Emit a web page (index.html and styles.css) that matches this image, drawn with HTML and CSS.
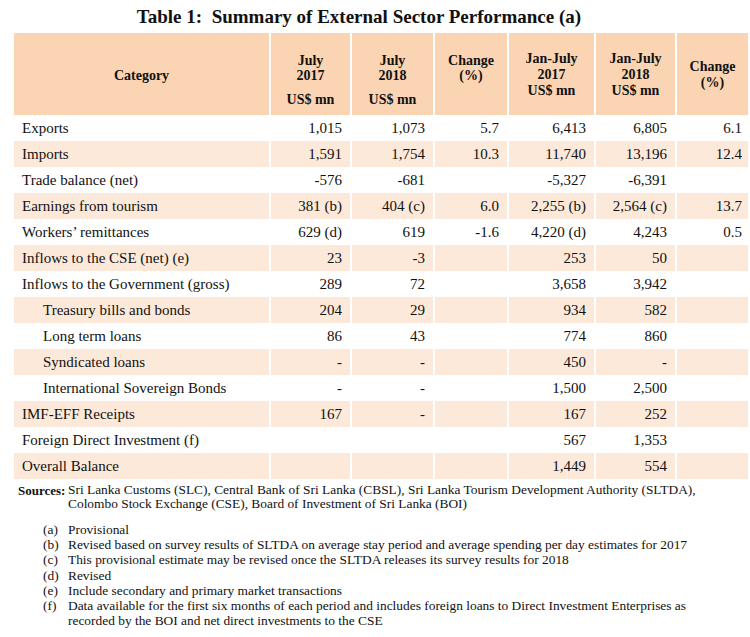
FILE: index.html
```html
<!DOCTYPE html>
<html lang="en">
<head>
<meta charset="utf-8">
<title>Table 1: Summary of External Sector Performance</title>
<link rel="stylesheet" href="styles.css">
</head>
<body>
<div class="page">
  <h1 class="title">Table 1:&nbsp; Summary of External Sector Performance (a)</h1>
  <table class="summary">
    <colgroup>
      <col class="c-cat"><col class="c-m1"><col class="c-m2"><col class="c-ch1"><col class="c-y1"><col class="c-y2"><col class="c-ch2">
    </colgroup>
    <thead>
      <tr>
        <th class="h-cat">Category</th>
        <th class="h-month">July<br>2017<div class="unit">US$ mn</div></th>
        <th class="h-month">July<br>2018<div class="unit">US$ mn</div></th>
        <th class="h-change">Change<br>(%)</th>
        <th class="h-ytd">Jan-July<br>2017<br>US$ mn</th>
        <th class="h-ytd">Jan-July<br>2018<br>US$ mn</th>
        <th class="h-change2">Change<br>(%)</th>
      </tr>
    </thead>
    <tbody>
      <tr><td>Exports</td><td>1,015</td><td>1,073</td><td>5.7</td><td>6,413</td><td>6,805</td><td>6.1</td></tr>
      <tr class="alt"><td>Imports</td><td>1,591</td><td>1,754</td><td>10.3</td><td>11,740</td><td>13,196</td><td>12.4</td></tr>
      <tr><td>Trade balance (net)</td><td>-576</td><td>-681</td><td></td><td>-5,327</td><td>-6,391</td><td></td></tr>
      <tr class="alt"><td>Earnings from tourism</td><td>381 (b)</td><td>404 (c)</td><td>6.0</td><td>2,255 (b)</td><td>2,564 (c)</td><td>13.7</td></tr>
      <tr><td>Workers’ remittances</td><td>629 (d)</td><td>619</td><td>-1.6</td><td>4,220 (d)</td><td>4,243</td><td>0.5</td></tr>
      <tr class="alt"><td>Inflows to the CSE (net) (e)</td><td>23</td><td>-3</td><td></td><td>253</td><td>50</td><td></td></tr>
      <tr><td>Inflows to the Government (gross)</td><td>289</td><td>72</td><td></td><td>3,658</td><td>3,942</td><td></td></tr>
      <tr class="alt"><td class="sub">Treasury bills and bonds</td><td>204</td><td>29</td><td></td><td>934</td><td>582</td><td></td></tr>
      <tr><td class="sub">Long term loans</td><td>86</td><td>43</td><td></td><td>774</td><td>860</td><td></td></tr>
      <tr class="alt"><td class="sub">Syndicated loans</td><td>-</td><td>-</td><td></td><td>450</td><td>-</td><td></td></tr>
      <tr><td class="sub">International Sovereign Bonds</td><td>-</td><td>-</td><td></td><td>1,500</td><td>2,500</td><td></td></tr>
      <tr class="alt"><td>IMF-EFF Receipts</td><td>167</td><td>-</td><td></td><td>167</td><td>252</td><td></td></tr>
      <tr><td>Foreign Direct Investment (f)</td><td></td><td></td><td></td><td>567</td><td>1,353</td><td></td></tr>
      <tr class="alt"><td>Overall Balance</td><td></td><td></td><td></td><td>1,449</td><td>554</td><td></td></tr>
    </tbody>
  </table>
  <div class="notes">
    <div class="sources">
      <span class="src-label">Sources:</span>
      <span class="src-text">Sri Lanka Customs (SLC), Central Bank of Sri Lanka (CBSL), Sri Lanka Tourism Development Authority (SLTDA), Colombo Stock Exchange (CSE), Board of Investment of Sri Lanka (BOI)</span>
    </div>
    <ul class="footnotes">
      <li><span class="fn-key">(a)</span><span class="fn-text">Provisional</span></li>
      <li><span class="fn-key">(b)</span><span class="fn-text">Revised based on survey results of SLTDA on average stay period and average spending per day estimates for 2017</span></li>
      <li><span class="fn-key">(c)</span><span class="fn-text">This provisional estimate may be revised once the SLTDA releases its survey results for 2018</span></li>
      <li><span class="fn-key">(d)</span><span class="fn-text">Revised</span></li>
      <li><span class="fn-key">(e)</span><span class="fn-text">Include secondary and primary market transactions</span></li>
      <li><span class="fn-key">(f)</span><span class="fn-text">Data available for the first six months of each period and includes foreign loans to Direct Investment Enterprises as recorded by the BOI and net direct investments to the CSE</span></li>
    </ul>
  </div>
</div>
</body>
</html>
```
FILE: styles.css
```css
html, body {
  margin: 0;
  padding: 0;
  background: #ffffff;
}

.page {
  width: 750px;
  font-family: "Liberation Serif", "Times New Roman", serif;
  color: #111111;
}

.title {
  margin: 0;
  height: 33px;
  line-height: 34px;
  font-size: 19px;
  font-weight: bold;
  text-align: center;
  padding-right: 32px;
  box-sizing: border-box;
}

.summary {
  margin-left: 14px;
  width: 734px;
  table-layout: fixed;
  border-collapse: collapse;
  font-size: 15px;
}

.c-cat { width: 256px; }
.c-m1 { width: 81px; }
.c-m2 { width: 83px; }
.c-ch1 { width: 74px; }
.c-y1 { width: 87px; }
.c-y2 { width: 81px; }
.c-ch2 { width: 72px; }

.summary th,
.summary td {
  border-right: 2px solid #ffffff;
  box-sizing: border-box;
}

.summary th:last-child,
.summary td:last-child {
  border-right: none;
}

.summary thead tr {
  background: #fbd4b4;
  height: 82px;
}

.summary th {
  font-size: 14px;
  font-weight: bold;
  text-align: center;
  vertical-align: top;
  line-height: 15px;
  padding: 0 2px;
}

.summary th.h-cat {
  vertical-align: middle;
  padding-top: 3px;
}

.summary th.h-month,
.summary th.h-change {
  padding-top: 20px;
}

.summary th .unit {
  margin-top: 9px;
}

.summary th.h-ytd {
  padding-top: 18px;
  line-height: 16px;
}

.summary th.h-change2 {
  padding-top: 26px;
  line-height: 16px;
}

.summary tbody tr {
  height: 26px;
}

.summary tbody tr.alt {
  background: #fde9d9;
}

.summary td {
  padding: 0 8px 0 8px;
  text-align: right;
  vertical-align: middle;
  white-space: nowrap;
}

.summary td:first-child {
  text-align: left;
}

.summary td.sub {
  padding-left: 29px;
}

.summary td:last-child {
  padding-right: 6px;
}

.notes {
  font-size: 13.4px;
  line-height: 15.2px;
}

.sources {
  display: flex;
  padding: 4px 0 0 18px;
}

.src-label {
  font-weight: bold;
  font-size: 13px;
  width: 50px;
  flex: none;
}

.src-text {
  width: 630px;
  line-height: 14px;
}

.footnotes {
  list-style: none;
  margin: 11px 0 0 0;
  padding: 0 0 0 43px;
}

.footnotes li {
  display: flex;
}

.fn-key {
  width: 25px;
  flex: none;
}

.fn-text {
  width: 640px;
}
```
